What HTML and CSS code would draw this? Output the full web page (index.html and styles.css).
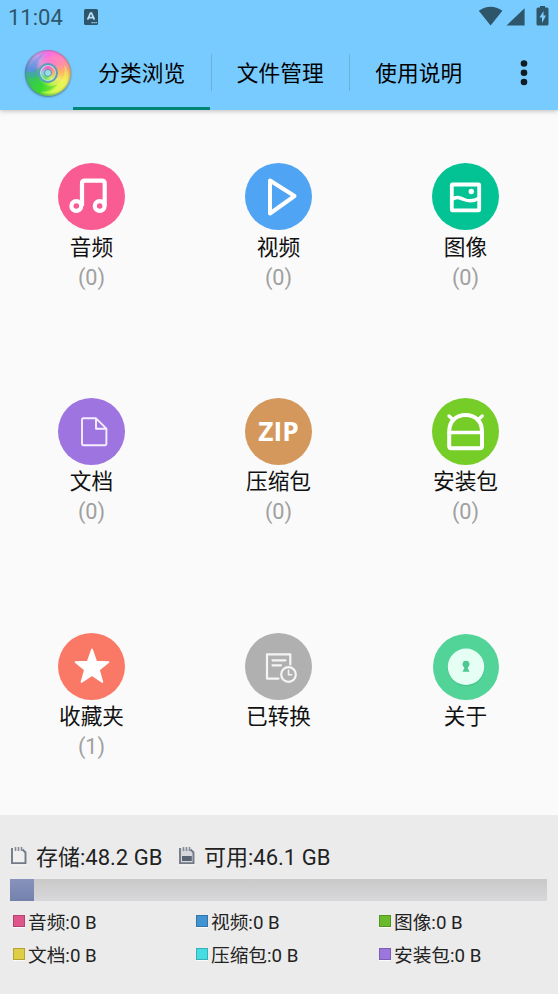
FILE: index.html
```html
<!DOCTYPE html>
<html lang="zh-CN">
<head>
<meta charset="utf-8">
<title>分类浏览</title>
<link rel="stylesheet" href="styles.css">
</head>
<body>
<header class="top">
  <div class="status">
    <span class="clock">11:04</span>
    <svg class="input-badge" width="14" height="16" viewBox="0 0 14 16"><rect width="14" height="16" rx="1.5" fill="#2d566b"/><path d="M3.6 10.7 6.5 4h1l2.9 6.7M4.8 8.6h4.4" fill="none" stroke="#b9e2fa" stroke-width="1.7"/><path d="M7.5 13.7h5.5" stroke="#a8daf7" stroke-width="1.2" stroke-dasharray="1.3 .7"/></svg>
    <svg class="signals" width="72" height="22" viewBox="0 0 72 22"><path d="M.8 5.800Q12.500-2.200 24.400 5.800L12.600 20.500z M46.600 3.200V20.500H28.500z" fill="#2d566b"/><path d="M62 1h5v1.500h2q1.500 0 1.500 1.500v15q0 1.500-1.500 1.500h-9q-1.500 0-1.500-1.500V4q0-1.500 1.500-1.500h2z" fill="#2d566b"/><path d="m65.500 6-4 6.500h2.500V18l4-7.500h-2.500z" fill="#78cbff"/></svg>
  </div>
  <div class="toolbar">
    <div class="logo">
      <svg class="logo-swirl" viewBox="0 0 46 46">
        <path d="M13 25C9 12 21 3 37 6.500C44 13 44 22 42 27C40 17 34 13 27 13C19 13 15 18 13 25z" fill="#ff8ab8" fill-opacity=".45"/>
        <path d="M14 17C10 31 20 40 33 34C30 41 21 44 14 42C5 38 1 29 2 21C5 24 10 22 14 17z" fill="#18d020" fill-opacity=".4"/>
        <path d="M23 35C34 37 42 28 39 15C44 20 45 29 40 36C34 44 24 45 16 42C22 42 28 39 31 35z" fill="#eaff50" fill-opacity=".5"/>
        <path d="M4 28C2 16 10 7 20 3C12 10 10 18 13 26z" fill="#4d90e8" fill-opacity=".35"/>
      </svg>
      <div class="logo-ring"><div class="logo-core"></div></div>
    </div>
    <nav class="tabs">
      <a class="tab active">分类浏览</a>
      <a class="tab">文件管理</a>
      <a class="tab">使用说明</a>
    </nav>
    <svg class="more" width="8" height="28" viewBox="0 0 8 28"><g fill="#101d25"><circle cx="4" cy="4.500" r="3.300"/><circle cx="4" cy="13.800" r="3.300"/><circle cx="4" cy="23" r="3.300"/></g></svg>
  </div>
</header>

<main class="grid">
  <div class="cell">
    <svg class="icon" viewBox="0 0 67 67"><circle cx="33.500" cy="33.500" r="33.500" fill="#f95c92"/><g fill="none" stroke="#fff" stroke-width="4.200"><circle cx="18.300" cy="43" r="4.900"/><circle cx="41.700" cy="43" r="4.900"/><path d="M24 43V20.500q0-2.800 2.800-2.800h17q2.900 0 2.900 2.800V43"/></g></svg>
    <div class="label">音频</div><div class="count">(0)</div>
  </div>
  <div class="cell">
    <svg class="icon" viewBox="0 0 67 67"><circle cx="33.500" cy="33.500" r="33.500" fill="#50a4f4"/><path d="M25 17.500v33L49.500 33z" fill="none" stroke="#fff" stroke-width="4" stroke-linejoin="round"/></svg>
    <div class="label">视频</div><div class="count">(0)</div>
  </div>
  <div class="cell">
    <svg class="icon" viewBox="0 0 67 67"><circle cx="33.500" cy="33.500" r="33.500" fill="#03c395"/><g fill="none" stroke="#fff"><rect x="19.800" y="21.500" width="27.400" height="25.800" rx=".7" stroke-width="3.800"/><path d="M20 36.300c5-3.300 8-1.500 12 .2s9 2.300 15-1.200" stroke-width="3.500"/></g><circle cx="39.300" cy="28.500" r="2.700" fill="#fff"/></svg>
    <div class="label">图像</div><div class="count">(0)</div>
  </div>
  <div class="cell">
    <svg class="icon" viewBox="0 0 67 67"><circle cx="33.500" cy="33.500" r="33.500" fill="#9e74e0"/><path d="M38 20.300H25.200q-1.200 0-1.200 1.200v24.600q0 1.200 1.200 1.200h22q1.200 0 1.200-1.200V30.700zV30.700H48.400" fill="none" stroke="#f6eeff" stroke-width="1.900" stroke-linejoin="round"/></svg>
    <div class="label">文档</div><div class="count">(0)</div>
  </div>
  <div class="cell">
    <svg class="icon" viewBox="0 0 67 67"><circle cx="33.500" cy="33.500" r="33.500" fill="#d4975c"/><text class="zip" x="33.500" y="42.700" text-anchor="middle">ZIP</text></svg>
    <div class="label">压缩包</div><div class="count">(0)</div>
  </div>
  <div class="cell">
    <svg class="icon" viewBox="0 0 67 67"><circle cx="33.500" cy="33.500" r="33.500" fill="#76cd27"/><g fill="none" stroke="#fff" stroke-width="4" stroke-linecap="round"><path d="M17.200 33.500C17.200 23 24.500 17 33.600 17S50 23 50 33.500V48q0 2.200-2.200 2.200H19.400q-2.200 0-2.200-2.200z"/><path d="M17.200 34.500H50" stroke-width="3.600"/><path d="m17 18 4.500 4M50.200 18l-4.500 4" stroke-width="3.400"/></g></svg>
    <div class="label">安装包</div><div class="count">(0)</div>
  </div>
  <div class="cell">
    <svg class="icon" viewBox="0 0 67 67"><circle cx="33.500" cy="33.500" r="33.500" fill="#fa7966"/><path d="m34 16.500 4.200 12.200 12.300.4-9.600 7.700 3.400 12.100L34 42 23.500 48.900l3.500-12.100-9.500-7.700 12.200-.4z" fill="#fff" stroke="#fff" stroke-width="1.800" stroke-linejoin="round"/></svg>
    <div class="label">收藏夹</div><div class="count">(1)</div>
  </div>
  <div class="cell">
    <svg class="icon" viewBox="0 0 67 67"><circle cx="33.500" cy="33.500" r="33.500" fill="#b0b0b0"/><g fill="none" stroke="#f5f5f5" stroke-width="2.200" stroke-linecap="round" stroke-linejoin="round"><path d="M45.300 31.500V21.400H22v24.200h11.500M27.500 27.300h13M27.500 32.300h8.500"/><circle cx="43.500" cy="41.500" r="7.300"/><path d="M43.500 37.300v4.400h3.200" stroke-width="1.600"/></g></svg>
    <div class="label">已转换</div>
  </div>
  <div class="cell">
    <svg class="icon" viewBox="0 0 67 67"><circle cx="34" cy="34" r="33" fill="#52d397"/><circle cx="34" cy="35" r="18.400" fill="#48c789"/><circle cx="34" cy="33.800" r="18.200" fill="#e5fff4"/><circle cx="34" cy="31.200" r="3.400" fill="#4dc990"/><path d="M32.200 32h3.600v3.500l1.700 3.300h-7l1.700-3.300z" fill="#4dc990"/></svg>
    <div class="label">关于</div>
  </div>
</main>

<footer class="storage">
  <div class="summary">
    <svg class="card" width="18" height="20" viewBox="0 0 18 20"><path d="M2 2v15.200h13.500V6.500L12.500 3.500" fill="#efeff0" stroke="#737a87" stroke-width="1.900"/><path d="M5.500 1v4M8.500 1v4M11.500 1v4" stroke="#858b97" stroke-width="1.600"/><path d="M1 18.900h16" stroke="#fff"/></svg>
    <span class="total">存储:48.2 GB</span>
    <svg class="card" width="18" height="20" viewBox="0 0 18 20"><path d="M2 2v15.200h13.500V6.500L12.500 3.500" fill="#d5d7dc" stroke="#737a87" stroke-width="1.900"/><path d="M5.500 1v4M8.500 1v4M11.500 1v4" stroke="#858b97" stroke-width="1.600"/><path d="M4 10h9.800v5H4z" fill="#596271"/><path d="M1 18.900h16" stroke="#fff"/></svg>
    <span>可用:46.1 GB</span>
  </div>
  <div class="bar"><div class="used"></div></div>
  <div class="legend">
    <span class="item"><i class="swatch pink"></i>音频:0 B</span>
    <span class="item"><i class="swatch blue"></i>视频:0 B</span>
    <span class="item"><i class="swatch green"></i>图像:0 B</span>
    <span class="item"><i class="swatch yellow"></i>文档:0 B</span>
    <span class="item"><i class="swatch cyan"></i>压缩包:0 B</span>
    <span class="item"><i class="swatch purple"></i>安装包:0 B</span>
  </div>
</footer>
</body>
</html>
```
FILE: styles.css
```css
* { box-sizing: border-box; }
body {
  margin: 0;
  width: 558px;
  height: 994px;
  overflow: hidden;
  display: flex;
  flex-direction: column;
  background: #fafafa;
  color: #111;
  font-family: Roboto, "Noto Sans CJK SC", sans-serif;
}
.top {
  flex: none;
  height: 110px;
  background: #78cbff;
  box-shadow: 0 1px 5px rgba(0, 0, 0, .25);
}
.status {
  height: 36px;
  display: flex;
  align-items: flex-start;
  padding: 5px 8px 0;
  color: #2d566b;
}
.clock {
  width: 76px;
  font-size: 22px;
  line-height: 25px;
}
.input-badge { margin-top: 4px; }
.signals { margin-left: auto; }
.toolbar { height: 74px; display: flex; align-items: center; }
.logo {
  flex: none;
  width: 46px;
  height: 46px;
  margin: 0 2px 0 25px;
  border-radius: 50%;
  display: grid;
  place-items: center;
  background: conic-gradient(#ff6ee6, #ff86b8 45deg, #ffb45e 85deg, #f1e866 120deg, #c4f24a 160deg, #4ee03a 205deg, #4cc080 245deg, #5a94da 280deg, #c2a2ea 325deg, #ff6ee6);
  box-shadow: 0 1px 2px rgba(30, 60, 80, .6);
}
.logo > * { grid-area: 1 / 1; }
.logo-swirl {
  width: 46px;
  height: 46px;
  border-radius: 50%;
  box-shadow: inset 0 0 3px rgba(40, 70, 80, .65);
}
.logo-ring {
  width: 20px;
  height: 20px;
  border: 2px solid #589ec0;
  border-radius: 50%;
  display: grid;
  place-items: center;
  background: conic-gradient(#ff58cb, #ffaa65 90deg, #d5f35b 150deg, #63df62 205deg, #91cddd 270deg, #ff58cb);
  box-shadow: inset 0 0 0 1px #c2e8dc;
}
.logo-core {
  width: 8px;
  height: 8px;
  border: 1.500px solid #4a9cb8;
  border-radius: 50%;
  background: #9edbe5;
}
.tabs { display: flex; align-self: stretch; }
.tab {
  position: relative;
  width: 138.500px;
  padding: 0 1px 3px 0;
  display: grid;
  place-items: center;
  color: #000;
  font-size: 21.700px;
}
.tab + .tab::before {
  content: "";
  position: absolute;
  left: -1px;
  top: 18px;
  width: 1px;
  height: 37px;
  background: #68b2e0;
}
.tab.active::after {
  content: "";
  position: absolute;
  left: 0;
  bottom: 0;
  width: 137px;
  height: 3px;
  background: #008577;
}
.more { margin-left: auto; margin-right: 30px; }
.grid {
  height: 705px;
  margin-left: -2px;
  padding-top: 53.400px;
  display: grid;
  grid-template-columns: repeat(3, 187px);
  grid-auto-rows: 234.600px;
}
.cell { display: flex; flex-direction: column; align-items: center; }
.icon { width: 67px; height: 67px; flex: none; }
.zip { font: 700 26.300px "Open Sans", sans-serif; fill: #fff; }
.label { font-size: 21.700px; line-height: 32px; padding-top: 1.200px; }
.count { font-size: 21.700px; line-height: 29px; margin-top: -1px; color: #a0a0a0; }
.storage {
  flex: none;
  height: 179px;
  padding: 25px 11px 0 10px;
  background: #ebebeb;
  color: #222;
}
.summary {
  display: flex;
  align-items: center;
  height: 32px;
  font-size: 22px;
}
.card { margin-right: 8px; flex: none; }
.summary span { padding-bottom: 2px; }
.total { width: 142px; }
.bar {
  height: 22px;
  margin-top: 7px;
  background: linear-gradient(#c9c9ca, #d8d8da);
}
.used {
  width: 24px;
  height: 22px;
  background: linear-gradient(#8892bd, #7382ac);
}
.legend {
  padding: 3px 0 0 3px;
  display: grid;
  grid-template-columns: repeat(3, 183px);
  grid-auto-rows: 33px;
  font-size: 18.700px;
}
.item { display: flex; align-items: center; }
.swatch {
  width: 12px;
  height: 12px;
  margin: 0 3px 0 0;
  border: 1px solid rgba(0, 0, 0, .2);
  box-shadow: 0 1px #fafafa;
}
.pink { background: #df568d; }
.blue { background: #4293d1; }
.green { background: #69bb2b; }
.yellow { background: #dfce45; }
.cyan { background: #46dce4; }
.purple { background: #9b76dc; }
```
